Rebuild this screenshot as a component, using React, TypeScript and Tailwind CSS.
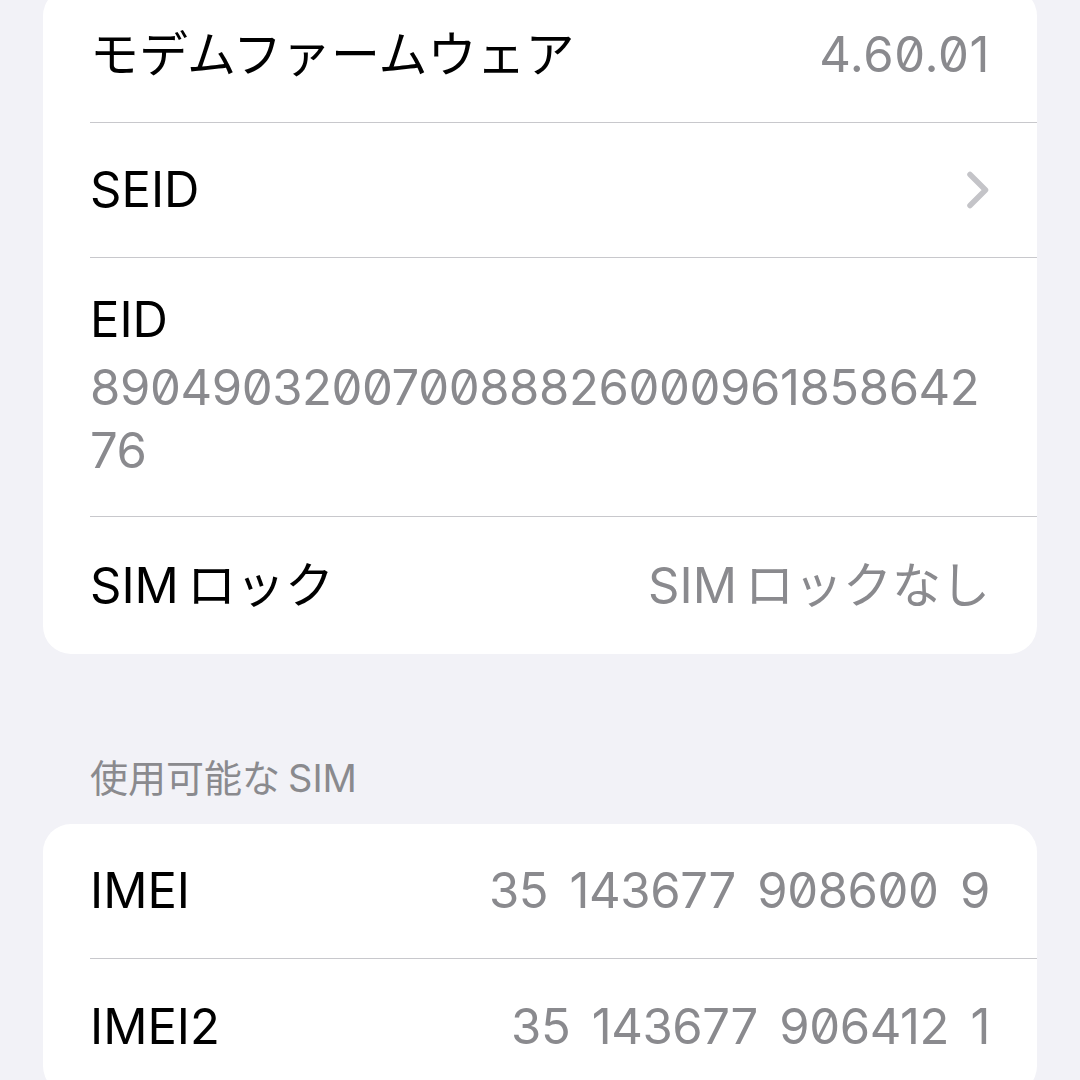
import React from "react";

const font = "font-['Inter','Noto_Sans_CJK_JP',sans-serif]";

const Chevron = () => (
  <svg width="24" height="38" viewBox="0 0 24 38" fill="none">
    <path
      d="M4 3.5 L19.5 19 L4 34.5"
      stroke="#c4c4c8"
      strokeWidth="5.5"
      strokeLinecap="round"
      strokeLinejoin="round"
    />
  </svg>
);

// iOS puts a little air between latin and kana
const SimLock = ({ suffix }: { suffix: string }) => (
  <>
    SIM<span className="ml-[8px]">{suffix}</span>
  </>
);

type RowProps = {
  label: React.ReactNode;
  value?: React.ReactNode;
  valueClass?: string;
  chevron?: boolean;
  last?: boolean;
  h?: string;
};

const Row = ({ label, value, valueClass = "", chevron, last, h = "h-[135px]" }: RowProps) => (
  <div className="pl-[47px]">
    <div
      className={`${h} flex items-center justify-between pr-[47px] ${
        last ? "" : "border-b border-[#c8c8cc]"
      }`}
    >
      <span className="text-[49px] leading-[60px] text-black">{label}</span>
      {value && (
        <span className={`text-[49px] leading-[60px] text-[#8a8a8e] slashed-zero ${valueClass}`}>
          {value}
        </span>
      )}
      {chevron && <Chevron />}
    </div>
  </div>
);

const imei = "tracking-[-0.4px] [word-spacing:8px]";

export default function App() {
  return (
    <div className={`h-[1080px] w-[1080px] overflow-hidden bg-[#f2f2f7] ${font}`}>
      <div className="mx-[43px] -mt-[12px] rounded-[28px] bg-white">
        <Row label="モデムファームウェア" value="4.60.01" valueClass="tracking-[0.6px]" />
        <Row label="SEID" chevron />
        <div className="pl-[47px]">
          <div className="border-b border-[#c8c8cc] pr-[47px] pt-[30px] pb-[34px]">
            <div className="text-[49px] leading-[63px] text-black">EID</div>
            <div className="mt-[5px] text-[49px] leading-[63px] tracking-[-0.4px] text-[#8a8a8e] slashed-zero">
              <div>890490320070088826000961858642</div>
              <div>76</div>
            </div>
          </div>
        </div>
        <Row label={<SimLock suffix="ロック" />} value={<SimLock suffix="ロックなし" />} last h="h-[137px]" />
      </div>

      <div className="mt-[102px] pl-[90px] text-[38px] leading-[44px] text-[#8a8a8e]">
        使用可能な<span className="ml-[8px]">SIM</span>
      </div>

      <div className="mx-[43px] mt-[24px] rounded-[28px] bg-white">
        <Row label="IMEI" value="35 143677 908600 9" valueClass={imei} />
        <Row label="IMEI2" value="35 143677 906412 1" valueClass={imei} last />
      </div>
    </div>
  );
}
